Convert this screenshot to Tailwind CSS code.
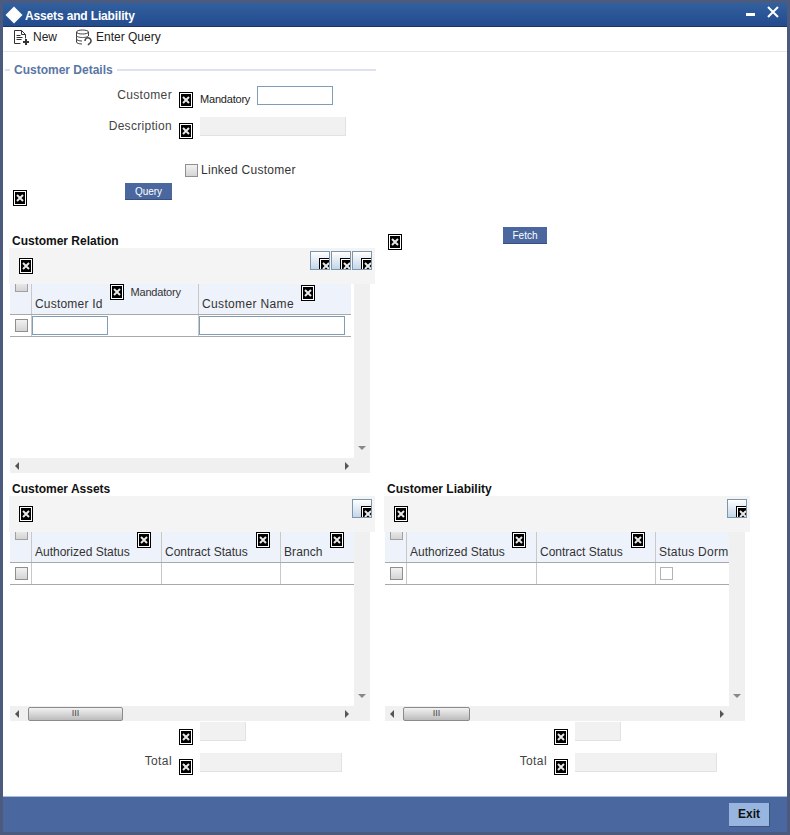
<!DOCTYPE html>
<html>
<head>
  <title>Assets and Liability</title>
  <script src="https://cdn.jsdelivr.net/npm/@tailwindcss/browser@4"></script>
</head>
<body class="w-[790px] h-[835px] overflow-hidden bg-[#4c5a7e] font-['Liberation_Sans',Arial,sans-serif] text-[12px] text-[#333]">
  <!-- Broken image placeholder -->
  <svg class="hidden">
    <symbol id="broken" viewBox="0 0 14 16">
      <rect x="0" y="0" width="14" height="16" fill="#000"/>
      <rect x="1" y="1" width="12" height="14" fill="#fff"/>
      <rect x="2" y="2" width="10" height="12" fill="#000"/>
      <path d="M4 5l6 6M10 5l-6 6" stroke="#e8e8e8" stroke-width="2"/>
    </symbol>
  </svg>

  <div class="flex flex-col h-[835px] pt-[3px] pl-[3px] pr-[3px] pb-[3px]">
    <!-- Title Bar -->
    <div class="h-[24px] shrink-0 flex items-center justify-between bg-gradient-to-b from-[#32609f] to-[#234b8d] border-b border-[#1a3560]">
      <div class="flex items-center">
        <div class="w-[12px] h-[12px] bg-white rotate-45 ml-[5px]"></div>
        <span class="ml-[5px] mt-[2px] text-white font-bold leading-none tracking-[-0.15px]">Assets and Liability</span>
      </div>
      <div class="flex items-start self-start mr-[8px]">
        <div class="w-[9px] h-[3px] bg-white mt-[10px] mr-[12px]"></div>
        <svg class="w-[12px] h-[12px] mt-[3px]" viewBox="0 0 12 12"><path d="M1 1l10 10M11 1L1 11" stroke="#fff" stroke-width="2"/></svg>
      </div>
    </div>

    <!-- Toolbar -->
    <div class="h-[25px] shrink-0 bg-white border-b border-[#e8e8e8] flex items-start text-[#222]">
      <svg class="w-[18px] h-[17px] ml-[10px] mt-[2px]" viewBox="0 0 18 17" fill="none" stroke="#333" stroke-width="1">
        <path d="M1.5 14.5V1.5h7l4 4v4M1.5 14.5h6M8.5 1.5v4h4M3.5 6.5h4M3.5 8.5h6M3.5 10.5h5"/>
        <path d="M13 10v6M10 13h6" stroke-width="2"/>
      </svg>
      <span class="ml-[2px] mt-[3px] leading-[15px]">New</span>
      <svg class="w-[17px] h-[17px] ml-[18px] mt-[2px]" viewBox="0 0 17 17" fill="none" stroke="#444" stroke-width="1">
        <ellipse cx="7.5" cy="3" rx="6" ry="2"/>
        <path d="M1.5 3v10c0 1.2 2.5 2 5.5 2M13.5 3v4M1.5 6.5c0 1.2 2.7 2 6 2s6-.8 6-2M1.5 10c0 1.2 2.5 2 5.5 2"/>
        <path d="M10 12a3 3 0 1 1 5.5 1.5L13 16" stroke-width="1.5"/>
      </svg>
      <span class="ml-[4px] mt-[3px] leading-[15px]">Enter Query</span>
    </div>

    <!-- Form content -->
    <div class="flex-1 bg-white">
      <!-- Customer Details -->
      <div class="h-[181px] pt-[10px]">
        <div class="flex items-center h-[16px] w-[373px] pl-[2px]">
          <div class="w-[5px] h-[2px] bg-[#dde3ee]"></div>
          <span class="mx-[4px] font-bold text-[#5a76a4] leading-none">Customer Details</span>
          <div class="flex-1 h-[2px] bg-[#dde3ee]"></div>
        </div>
        <div class="flex items-start h-[31px] mt-[8px]">
          <span class="w-[169px] text-right leading-[15px] mt-[2px] text-[#444] tracking-[0.35px]">Customer</span>
          <svg class="w-[14px] h-[16px] ml-[7px] mt-[6px]"><use href="#broken"/></svg>
          <span class="ml-[7px] mt-[6px] text-[11px] leading-[14px] text-[#222] tracking-[-0.2px]">Mandatory</span>
          <input type="text" class="w-[76px] h-[19px] ml-[7px] bg-white border border-[#7f9db9]">
        </div>
        <div class="flex items-start h-[40px]">
          <span class="w-[169px] text-right leading-[15px] mt-[2px] text-[#444] tracking-[0.3px]">Description</span>
          <svg class="w-[14px] h-[16px] ml-[7px] mt-[6px]"><use href="#broken"/></svg>
          <div class="w-[146px] h-[19px] ml-[7px] bg-[#f1f1f1] border-r border-b border-[#e2e2e2]"></div>
        </div>
        <div class="flex items-center h-[20px] ml-[182px] mt-[3px]">
          <div class="w-[13px] h-[13px] bg-gradient-to-b from-[#f2f2f2] to-[#d4d4d4] border border-[#8f8f8f]"></div>
          <span class="ml-[3px] text-[#333] tracking-[0.27px]">Linked Customer</span>
        </div>
        <div class="flex items-start mt-[3px]">
          <svg class="w-[14px] h-[16px] ml-[10px] mt-[7px]"><use href="#broken"/></svg>
          <button class="w-[47px] h-[17px] ml-[98px] pt-[1px] bg-[#4a689f] text-white text-[10px] leading-none border-b border-[#38507c]">Query</button>
        </div>
      </div>

      <!-- Customer Relation + Fetch -->
      <div class="flex items-start ml-[6px]">
        <div class="w-[366px] shrink-0">
          <div class="h-[15px] pl-[3px] font-bold text-[#111] leading-[17px]">Customer Relation</div>
          <div class="relative z-10 h-[36px] bg-[#f4f4f4] flex items-start justify-between pl-[10px] pr-[3px]">
            <svg class="w-[14px] h-[16px] mt-[10px]"><use href="#broken"/></svg>
            <div class="flex gap-[1px] mt-[3px]">
              <div class="w-[20px] h-[19px] overflow-hidden bg-gradient-to-b from-white to-[#c4d6e8] border border-[#7b97ae] pl-[8px] pt-[6px]"><svg class="block w-[14px] h-[16px]"><use href="#broken"/></svg></div>
              <div class="w-[20px] h-[19px] overflow-hidden bg-gradient-to-b from-white to-[#c4d6e8] border border-[#7b97ae] pl-[8px] pt-[6px]"><svg class="block w-[14px] h-[16px]"><use href="#broken"/></svg></div>
              <div class="w-[20px] h-[19px] overflow-hidden bg-gradient-to-b from-white to-[#c4d6e8] border border-[#7b97ae] pl-[8px] pt-[6px]"><svg class="block w-[14px] h-[16px]"><use href="#broken"/></svg></div>
            </div>
          </div>
          <div class="flex h-[174px] ml-[1px]">
            <div class="w-[344px] text-[#333]">
              <div class="flex w-[341px] h-[31px] bg-[#eef2fb] border-b border-[#a9a9a9]">
                <div class="w-[22px] border-r border-[#c8c8c8] pl-[5px]"><div class="w-[13px] h-[13px] -mt-[5px] bg-gradient-to-b from-[#f2f2f2] to-[#d4d4d4] border border-[#a0a0a0]"></div></div>
                <div class="w-[167px] border-r border-[#c8c8c8] flex items-start pl-[3px]">
                  <span class="mt-[13px] leading-[15px] tracking-[0.2px]">Customer Id</span>
                  <svg class="w-[14px] h-[16px] ml-[7px] shrink-0"><use href="#broken"/></svg>
                  <span class="ml-[7px] mt-[1px] text-[11px] leading-[14px] tracking-[-0.2px]">Mandatory</span>
                </div>
                <div class="flex-1 flex items-start pl-[3px]">
                  <span class="mt-[13px] leading-[15px] tracking-[0.35px]">Customer Name</span>
                  <svg class="w-[14px] h-[16px] ml-[7px] mt-[1px] shrink-0"><use href="#broken"/></svg>
                </div>
              </div>
              <div class="flex w-[341px] h-[22px] border-b border-[#a9a9a9]">
                <div class="w-[22px] border-r border-[#c8c8c8] pl-[5px] pt-[4px]"><div class="w-[13px] h-[13px] bg-gradient-to-b from-[#f2f2f2] to-[#d4d4d4] border border-[#8f8f8f]"></div></div>
                <div class="w-[167px] border-r border-[#c8c8c8] pt-[1px]"><input type="text" class="block w-[76px] h-[19px] bg-white border border-[#7f9db9]"></div>
                <div class="flex-1 pt-[1px]"><input type="text" class="block w-[146px] h-[19px] bg-white border border-[#7f9db9]"></div>
              </div>
            </div>
            <div class="w-[16px] bg-[#f0f0f0] flex flex-col justify-end items-center pb-[8px]"><div class="w-0 h-0 border-x-[4px] border-x-transparent border-t-[4px] border-t-[#888]"></div></div>
          </div>
          <div class="flex items-center justify-between h-[15px] w-[360px] ml-[1px] bg-[#f0f0f0] pl-[5px] pr-[21px]">
            <div class="w-0 h-0 border-y-[4px] border-y-transparent border-r-[4px] border-r-[#555]"></div>
            <div class="w-0 h-0 border-y-[4px] border-y-transparent border-l-[4px] border-l-[#555]"></div>
          </div>
        </div>
        <svg class="w-[14px] h-[16px] ml-[13px] mt-[1px]"><use href="#broken"/></svg>
        <button class="w-[44px] h-[17px] ml-[101px] -mt-[6px] pt-[1px] bg-[#4a689f] text-white text-[10px] leading-none border-b border-[#38507c]">Fetch</button>
      </div>

      <!-- Customer Assets / Customer Liability -->
      <div class="flex items-start ml-[6px] mt-[8px] gap-[9px]">
        <!-- Assets -->
        <div class="w-[366px] shrink-0">
          <div class="h-[15px] pl-[3px] font-bold text-[#111] leading-[17px]">Customer Assets</div>
          <div class="relative z-10 h-[36px] bg-[#f4f4f4] flex items-start justify-between pl-[10px] pr-[3px]">
            <svg class="w-[14px] h-[16px] mt-[10px]"><use href="#broken"/></svg>
            <div class="w-[20px] h-[19px] mt-[3px] overflow-hidden bg-gradient-to-b from-white to-[#c4d6e8] border border-[#7b97ae] pl-[8px] pt-[6px]"><svg class="block w-[14px] h-[16px]"><use href="#broken"/></svg></div>
          </div>
          <div class="flex h-[174px] ml-[1px]">
            <div class="w-[344px] overflow-hidden">
              <div class="flex w-[344px] h-[31px] bg-[#eef2fb] border-b border-[#a9a9a9]">
                <div class="w-[22px] border-r border-[#c8c8c8] pl-[5px]"><div class="w-[13px] h-[13px] -mt-[5px] bg-gradient-to-b from-[#f2f2f2] to-[#d4d4d4] border border-[#a0a0a0]"></div></div>
                <div class="w-[130px] border-r border-[#c8c8c8] flex items-start pl-[3px]">
                  <span class="mt-[13px] leading-[15px] whitespace-nowrap">Authorized Status</span>
                  <svg class="w-[14px] h-[16px] ml-[7px] shrink-0"><use href="#broken"/></svg>
                </div>
                <div class="w-[119px] border-r border-[#c8c8c8] flex items-start pl-[3px]">
                  <span class="mt-[13px] leading-[15px] whitespace-nowrap">Contract Status</span>
                  <svg class="w-[14px] h-[16px] ml-[8px] shrink-0"><use href="#broken"/></svg>
                </div>
                <div class="flex-1 flex items-start pl-[3px]">
                  <span class="mt-[13px] leading-[15px] tracking-[0.1px]">Branch</span>
                  <svg class="w-[14px] h-[16px] ml-[7px] shrink-0"><use href="#broken"/></svg>
                </div>
              </div>
              <div class="flex w-[344px] h-[22px] border-b border-[#a9a9a9]">
                <div class="w-[22px] border-r border-[#c8c8c8] pl-[5px] pt-[4px]"><div class="w-[13px] h-[13px] bg-gradient-to-b from-[#f2f2f2] to-[#d4d4d4] border border-[#8f8f8f]"></div></div>
                <div class="w-[130px] border-r border-[#c8c8c8]"></div>
                <div class="w-[119px] border-r border-[#c8c8c8]"></div>
              </div>
            </div>
            <div class="w-[16px] bg-[#f0f0f0] flex flex-col justify-end items-center pb-[8px]"><div class="w-0 h-0 border-x-[4px] border-x-transparent border-t-[4px] border-t-[#888]"></div></div>
          </div>
          <div class="flex items-center justify-between h-[15px] w-[360px] ml-[1px] bg-[#f0f0f0] pl-[5px] pr-[21px]">
            <div class="w-0 h-0 border-y-[4px] border-y-transparent border-r-[4px] border-r-[#555]"></div>
            <div class="w-[95px] h-[14px] mr-auto ml-[9px] rounded-[2px] bg-gradient-to-b from-[#f2f2f2] to-[#bcbcbc] border border-[#8a8a8a] flex items-center justify-center text-[9px] leading-none text-[#444]">III</div>
            <div class="w-0 h-0 border-y-[4px] border-y-transparent border-l-[4px] border-l-[#555]"></div>
          </div>
          <div class="flex items-start h-[31px] mt-[1px]">
            <svg class="w-[14px] h-[16px] ml-[170px] mt-[7px]"><use href="#broken"/></svg>
            <div class="w-[46px] h-[19px] ml-[7px] bg-[#f1f1f1] border-r border-b border-[#e2e2e2]"></div>
          </div>
          <div class="flex items-start">
            <span class="w-[163px] text-right leading-[15px] mt-[1px] text-[#444] tracking-[0.4px]">Total</span>
            <svg class="w-[14px] h-[16px] ml-[7px] mt-[6px]"><use href="#broken"/></svg>
            <div class="w-[142px] h-[19px] ml-[7px] bg-[#f1f1f1] border-r border-b border-[#e2e2e2]"></div>
          </div>
        </div>
        <!-- Liability -->
        <div class="w-[366px] shrink-0">
          <div class="h-[15px] pl-[3px] font-bold text-[#111] leading-[17px]">Customer Liability</div>
          <div class="relative z-10 h-[36px] bg-[#f4f4f4] flex items-start justify-between pl-[10px] pr-[3px]">
            <svg class="w-[14px] h-[16px] mt-[10px]"><use href="#broken"/></svg>
            <div class="w-[20px] h-[19px] mt-[3px] overflow-hidden bg-gradient-to-b from-white to-[#c4d6e8] border border-[#7b97ae] pl-[8px] pt-[6px]"><svg class="block w-[14px] h-[16px]"><use href="#broken"/></svg></div>
          </div>
          <div class="flex h-[174px] ml-[1px]">
            <div class="w-[344px] overflow-hidden">
              <div class="flex w-[344px] h-[31px] bg-[#eef2fb] border-b border-[#a9a9a9]">
                <div class="w-[22px] border-r border-[#c8c8c8] pl-[5px]"><div class="w-[13px] h-[13px] -mt-[5px] bg-gradient-to-b from-[#f2f2f2] to-[#d4d4d4] border border-[#a0a0a0]"></div></div>
                <div class="w-[130px] border-r border-[#c8c8c8] flex items-start pl-[3px]">
                  <span class="mt-[13px] leading-[15px] whitespace-nowrap">Authorized Status</span>
                  <svg class="w-[14px] h-[16px] ml-[7px] shrink-0"><use href="#broken"/></svg>
                </div>
                <div class="w-[119px] border-r border-[#c8c8c8] flex items-start pl-[3px]">
                  <span class="mt-[13px] leading-[15px] whitespace-nowrap">Contract Status</span>
                  <svg class="w-[14px] h-[16px] ml-[8px] shrink-0"><use href="#broken"/></svg>
                </div>
                <div class="flex-1 pl-[3px]">
                  <span class="block mt-[13px] leading-[15px] whitespace-nowrap tracking-[0.25px]">Status Dorm</span>
                </div>
              </div>
              <div class="flex w-[344px] h-[22px] border-b border-[#a9a9a9]">
                <div class="w-[22px] border-r border-[#c8c8c8] pl-[5px] pt-[4px]"><div class="w-[13px] h-[13px] bg-gradient-to-b from-[#f2f2f2] to-[#d4d4d4] border border-[#8f8f8f]"></div></div>
                <div class="w-[130px] border-r border-[#c8c8c8]"></div>
                <div class="w-[119px] border-r border-[#c8c8c8]"></div>
                <div class="pl-[4px] pt-[4px]"><div class="w-[13px] h-[13px] bg-white border border-[#b4b4b4]"></div></div>
              </div>
            </div>
            <div class="w-[16px] bg-[#f0f0f0] flex flex-col justify-end items-center pb-[8px]"><div class="w-0 h-0 border-x-[4px] border-x-transparent border-t-[4px] border-t-[#888]"></div></div>
          </div>
          <div class="flex items-center justify-between h-[15px] w-[360px] ml-[1px] bg-[#f0f0f0] pl-[5px] pr-[21px]">
            <div class="w-0 h-0 border-y-[4px] border-y-transparent border-r-[4px] border-r-[#555]"></div>
            <div class="w-[67px] h-[14px] mr-auto ml-[9px] rounded-[2px] bg-gradient-to-b from-[#f2f2f2] to-[#bcbcbc] border border-[#8a8a8a] flex items-center justify-center text-[9px] leading-none text-[#444]">III</div>
            <div class="w-0 h-0 border-y-[4px] border-y-transparent border-l-[4px] border-l-[#555]"></div>
          </div>
          <div class="flex items-start h-[31px] mt-[1px]">
            <svg class="w-[14px] h-[16px] ml-[170px] mt-[7px]"><use href="#broken"/></svg>
            <div class="w-[46px] h-[19px] ml-[7px] bg-[#f1f1f1] border-r border-b border-[#e2e2e2]"></div>
          </div>
          <div class="flex items-start">
            <span class="w-[163px] text-right leading-[15px] mt-[1px] text-[#444] tracking-[0.4px]">Total</span>
            <svg class="w-[14px] h-[16px] ml-[7px] mt-[6px]"><use href="#broken"/></svg>
            <div class="w-[142px] h-[19px] ml-[7px] bg-[#f1f1f1] border-r border-b border-[#e2e2e2]"></div>
          </div>
        </div>
      </div>
    </div>

    <!-- Footer -->
    <div class="h-[36px] shrink-0 bg-[#4a689f] border-t border-[#a9bdd9] flex items-center justify-end pr-[17px]">
      <button class="w-[41px] h-[24px] bg-[#97b5de] border-r border-b border-[#3d547f] text-[#111] font-bold text-[12px] leading-none">Exit</button>
    </div>
  </div>
</body>
</html>
